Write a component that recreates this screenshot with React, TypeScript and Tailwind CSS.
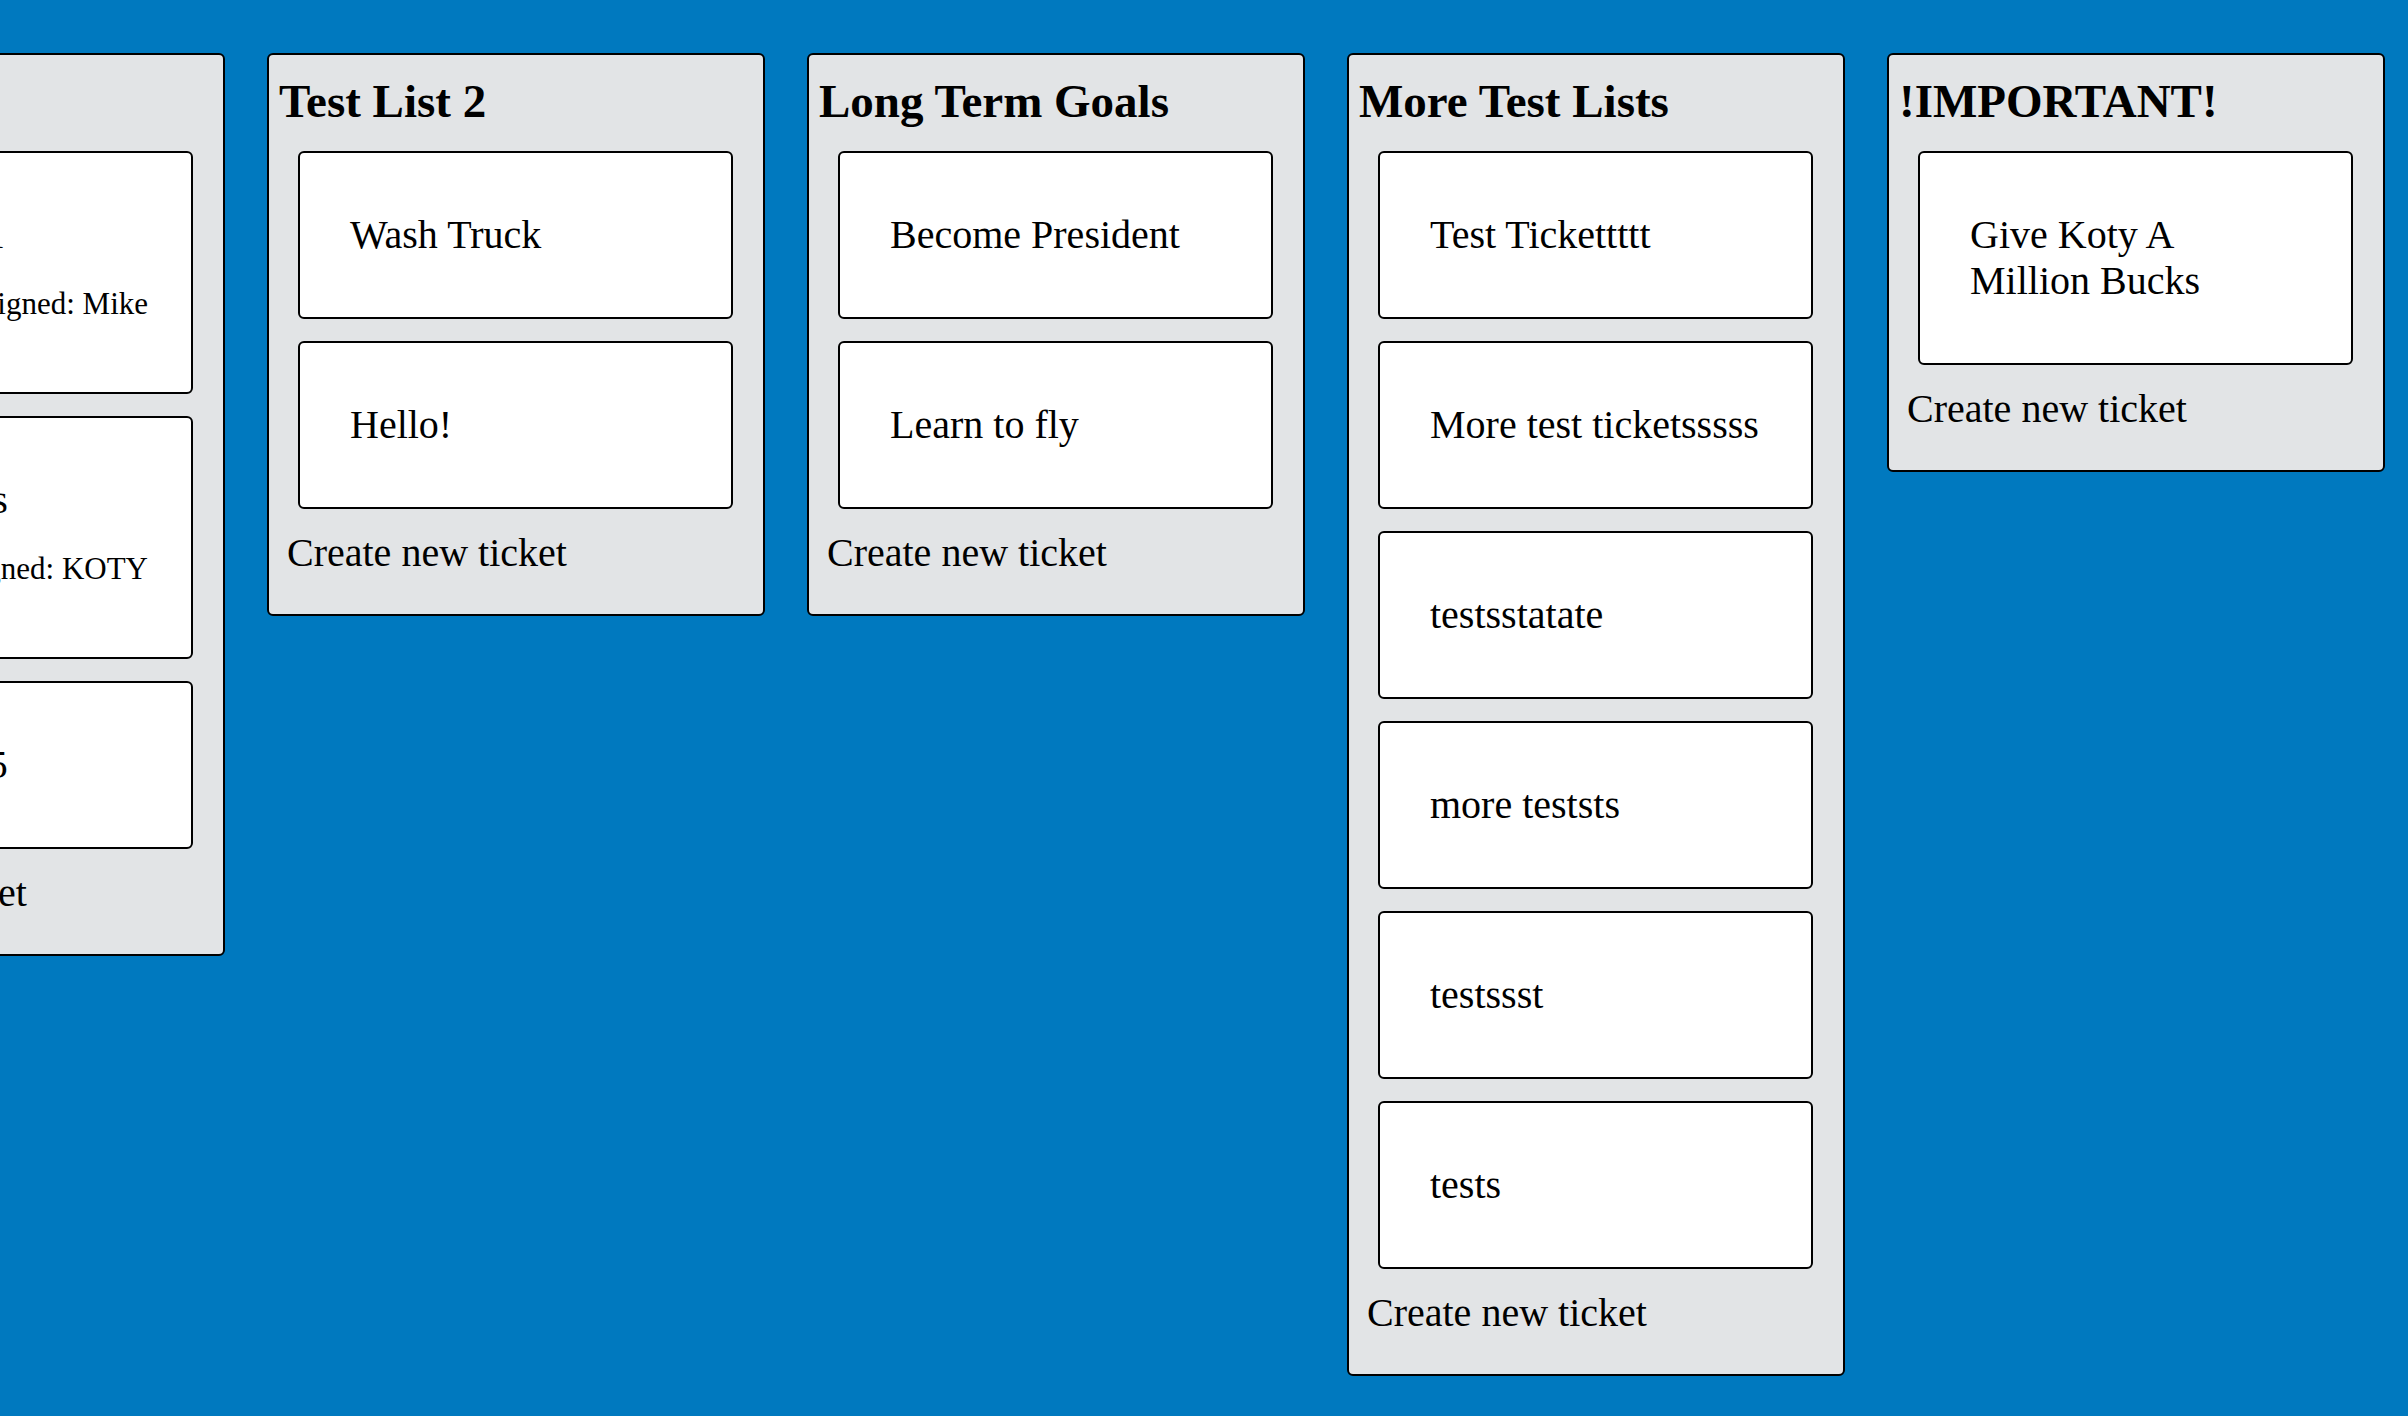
import React, { useLayoutEffect, useRef } from 'react';

type Ticket = { id: number; title: string; assignee?: string };
type TicketList = { id: number; name: string; tickets: Ticket[] };

const lists: TicketList[] = [
  {
    id: 1,
    name: 'Test List',
    tickets: [
      { id: 1, title: 'Test ticket 1', assignee: 'Mike' },
      { id: 2, title: 'Pay the bills', assignee: 'KOTY' },
      { id: 3, title: 'Deploy v1.5' },
    ],
  },
  {
    id: 2,
    name: 'Test List 2',
    tickets: [
      { id: 4, title: 'Wash Truck' },
      { id: 5, title: 'Hello!' },
    ],
  },
  {
    id: 3,
    name: 'Long Term Goals',
    tickets: [
      { id: 6, title: 'Become President' },
      { id: 7, title: 'Learn to fly' },
    ],
  },
  {
    id: 4,
    name: 'More Test Lists',
    tickets: [
      { id: 8, title: 'Test Tickettttt' },
      { id: 9, title: 'More test ticketsssss' },
      { id: 10, title: 'testsstatate' },
      { id: 11, title: 'more teststs' },
      { id: 12, title: 'testssst' },
      { id: 13, title: 'tests' },
    ],
  },
  {
    id: 5,
    name: '!IMPORTANT!',
    tickets: [{ id: 14, title: 'Give Koty A Million Bucks' }],
  },
];

export default function App() {
  const boardRef = useRef<HTMLDivElement>(null);

  // board is scrolled a bit to the right, like in the screenshot
  useLayoutEffect(() => {
    if (boardRef.current) boardRef.current.scrollLeft = 315;
  }, []);

  return (
    <div className="min-h-screen bg-[#0079bf] font-['Liberation_Serif',serif] text-black">
      <div ref={boardRef} className="overflow-x-hidden">
        <div className="flex w-max items-start gap-[42px] px-[42px] pt-[53px] pb-[20px]">
          {lists.map((list) => (
            <div
              key={list.id}
              className="w-[498px] shrink-0 rounded-[6px] border-2 border-black bg-[#e2e4e6] px-[10px] pt-[19px] pb-[38px]"
            >
              <h2 className="mb-[22px] text-[47px] font-bold leading-[55px]">{list.name}</h2>

              {/* Tickets */}
              <div className="flex flex-col gap-[22px]">
                {list.tickets.map((ticket) => (
                  <div
                    key={ticket.id}
                    className="ml-[19px] w-[435px] rounded-[6px] border-2 border-black bg-white py-[59px] pl-[50px] pr-[50px]"
                  >
                    <p className="text-[40px] leading-[46px]">{ticket.title}</p>
                    {ticket.assignee && (
                      <p className="mt-[29px] mb-[12px] -mr-[7px] text-right text-[31px] leading-[34px]">
                        Assigned: {ticket.assignee}
                      </p>
                    )}
                  </div>
                ))}
              </div>

              <div className="mt-[21px] ml-[8px] cursor-pointer text-[40px] leading-[46px]">Create new ticket</div>
            </div>
          ))}
        </div>
      </div>
    </div>
  );
}
